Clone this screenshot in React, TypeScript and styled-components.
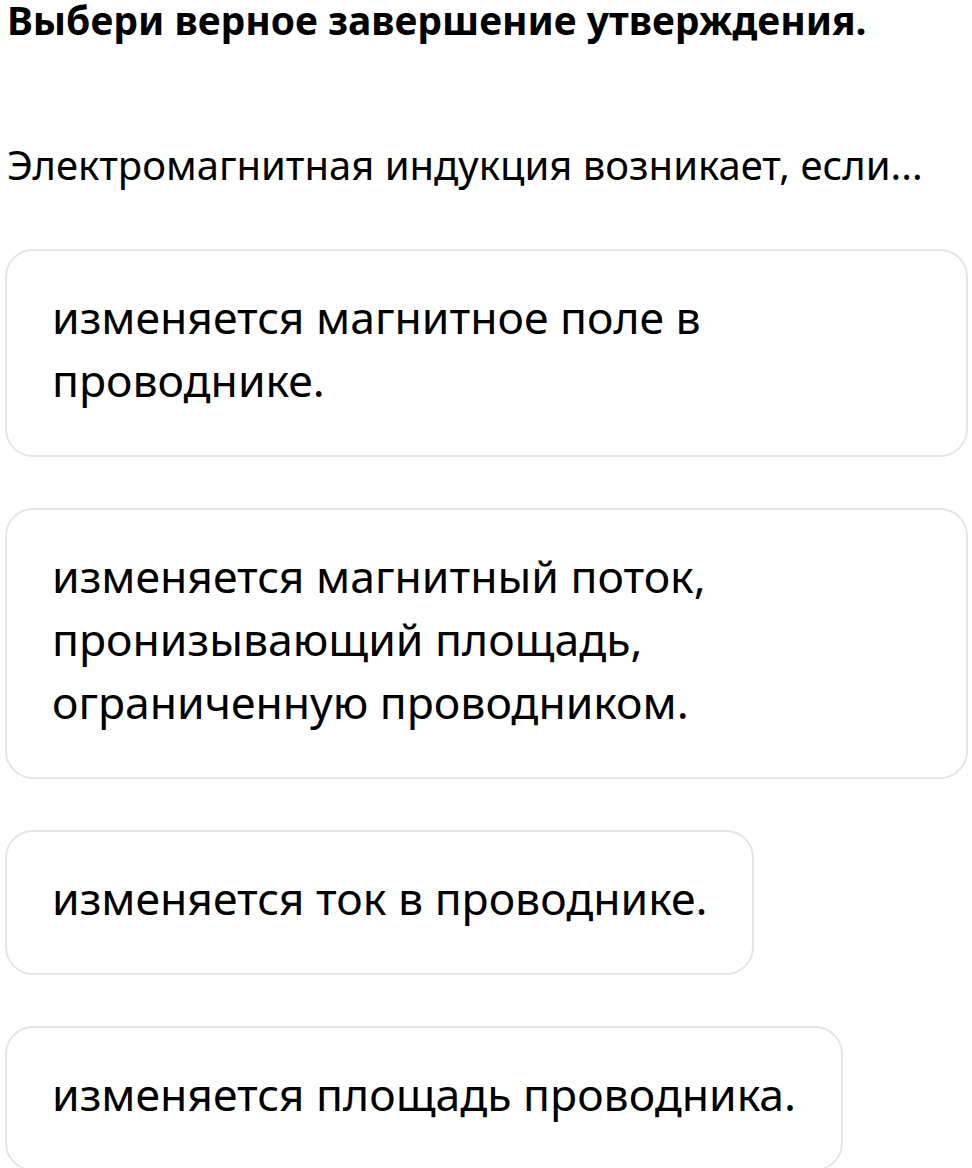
import styled, { createGlobalStyle } from "styled-components"

const Global = createGlobalStyle`
    html, body {
        margin: 0;
        padding: 0;
        background: #ffffff;
    }
    body {
        font-family: "Noto Sans", "Open Sans", sans-serif;
        color: #000000;
    }
`

const Page = styled.div`
    display: flex;
    flex-direction: column;
    align-items: flex-start;
    padding: 0 4px 0 5px;
`

const Title = styled.h1`
    margin: 0;
    padding: 2px 0 0 2px;
    font-size: 39px;
    line-height: 36px;
    font-weight: 700;
`

const Prompt = styled.p`
    margin: 100px 0 0 0;
    padding-left: 2px;
    font-size: 40px;
    line-height: 54px;
    font-weight: 400;
`

const Options = styled.div`
    display: flex;
    flex-direction: column;
    align-items: flex-start;
    gap: 51px;
    margin-top: 57px;
    width: 100%;
`

const Option = styled.button`
    box-sizing: border-box;
    max-width: 100%;
    margin: 0;
    padding: 34px 45px 44px 45px;
    border: 2px solid #e5e5e5;
    border-radius: 28px;
    background: #ffffff;
    font-family: inherit;
    font-size: 44.5px;
    line-height: 63px;
    color: #000000;
    text-align: left;
    cursor: pointer;
`

const answers = [
    "изменяется магнитное поле в проводнике.",
    "изменяется магнитный поток, пронизывающий площадь, ограниченную проводником.",
    "изменяется ток в проводнике.",
    "изменяется площадь проводника.",
]

const App = () => {
    return (
        <>
            <Global />
            <Page>
                <Title>Выбери верное завершение утверждения.</Title>
                <Prompt>Электромагнитная индукция возникает, если...</Prompt>
                <Options>
                    {answers.map((a) => (
                        <Option key={a}>{a}</Option>
                    ))}
                </Options>
            </Page>
        </>
    )
}

export default App
